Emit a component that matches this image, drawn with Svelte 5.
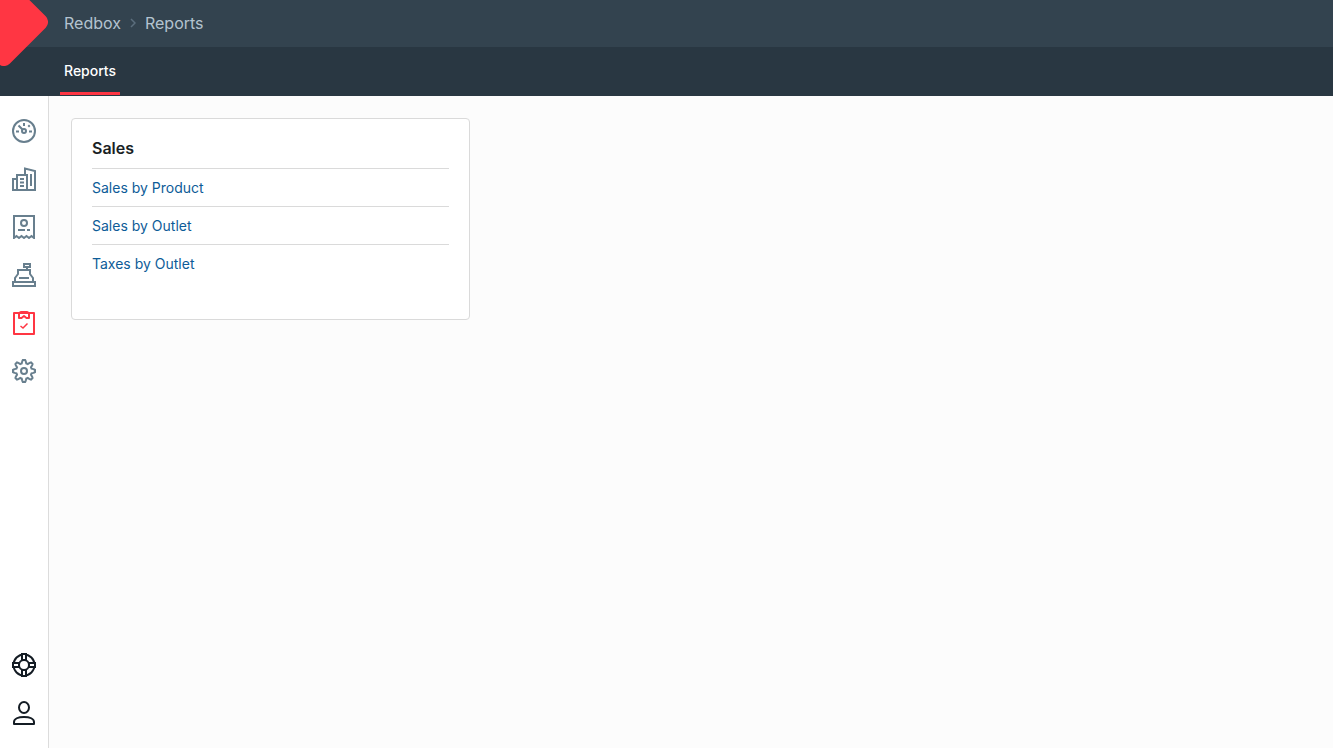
<script lang="ts">
	const tabs = [{ label: 'Reports', href: '#reports', active: true }];

	const groups = [
		{
			title: 'Sales',
			reports: [
				{ label: 'Sales by Product', href: '#sales-by-product' },
				{ label: 'Sales by Outlet', href: '#sales-by-outlet' },
				{ label: 'Taxes by Outlet', href: '#taxes-by-outlet' }
			]
		}
	];

	const mainNav = [
		{ id: 'dashboard', label: 'Dashboard' },
		{ id: 'company', label: 'Company' },
		{ id: 'receipts', label: 'Receipts' },
		{ id: 'registers', label: 'Registers' },
		{ id: 'reports', label: 'Reports' },
		{ id: 'settings', label: 'Settings' }
	];

	const footerNav = [
		{ id: 'help', label: 'Help' },
		{ id: 'account', label: 'Account' }
	];

	let current = $state('reports');

	// outline of the cog: eight rounded teeth
	const cog = Array.from({ length: 128 }, (_, i) => {
		const angle = (i / 128) * Math.PI * 2;
		const wave = Math.max(-1, Math.min(1, Math.cos(angle * 8) * 1.4));
		const r = 9.5 + wave * 1.6;
		return `${(12 + r * Math.cos(angle)).toFixed(2)},${(12 + r * Math.sin(angle)).toFixed(2)}`;
	}).join(' ');
</script>

{#snippet icon(id: string)}
	<svg class="icon" viewBox="0 0 24 24" aria-hidden="true">
		{#if id === 'dashboard'}
			<circle cx="12" cy="12" r="11" />
			<circle cx="12" cy="12" r="2" />
			<path d="M6.5 6.5 10.5 10.5M12 4v3M4 12.5h3M17 12.5h3M16.3 7.7l1.4-1.4" />
		{:else if id === 'company'}
			<path d="M5 12H1v11h22V4L13 1.500V8M5 23V8h10v15M8 12h4M8 15.500h4M8 19h4M19 7v12" />
		{:else if id === 'receipts'}
			<path d="M2 23V1h20v22l-2.500-2-2.500 2-2.500-2-2.500 2-2.500-2L7 23l-2.500-2z" />
			<circle cx="12" cy="8" r="3" />
			<path d="M6 15h7M15 15h3" />
		{:else if id === 'registers'}
			<path d="M1 19h22v4H1zM3 19v-4l3-4V7h12v4l3 4v4M7 15h10M12 1h6v3h-6zM15 4v3" />
		{:else if id === 'reports'}
			<path d="M2 2h20v21H2z" stroke-linejoin="round" />
			<path d="M7 2v5h2.500L12 5l2.500 2H17V2c-1 0-1-1-2-1H9C8 1 8 2 7 2" stroke-linejoin="round" />
			<path class="thin" d="m8.500 15 2.500 2 4.500-4.500" />
		{:else if id === 'settings'}
			<circle cx="12" cy="12" r="3" />
			<polygon points={cog} />
		{:else if id === 'help'}
			<circle cx="12" cy="12" r="10.500" />
			<circle cx="12" cy="12" r="5" />
			<path class="paper" d="M10 1h4v6h-4zM10 17h4v6h-4zM1 10h6v4H1zM17 10h6v4h-6z" />
		{:else if id === 'account'}
			<ellipse cx="12" cy="6.500" rx="5" ry="5.500" />
			<path d="M2 23v-2c0-3 4-5 10-5s10 2 10 5v2z" stroke-linejoin="round" />
		{/if}
	</svg>
{/snippet}

{#snippet navLinks(items: { id: string; label: string }[])}
	{#each items as item (item.id)}
		<a
			class="nav-link"
			class:active={current === item.id}
			href="#{item.id}"
			aria-label={item.label}
			onclick={() => (current = item.id)}
		>
			{@render icon(item.id)}
		</a>
	{/each}
{/snippet}

<div class="app">
	<header class="header">
		<a class="logo" href="#home" aria-label="Home">
			<svg viewBox="0 0 48 66" aria-hidden="true">
				<rect x="-29.500" y="-11.500" width="67" height="67" rx="8" transform="rotate(45 4 22)" />
			</svg>
		</a>
		<nav class="breadcrumbs" aria-label="Breadcrumb">
			<a href="#redbox">Redbox</a>
			<svg class="chevron" viewBox="0 0 6 10" aria-hidden="true">
				<path d="m1 1 4 4-4 4" />
			</svg>
			<a href="#reports">Reports</a>
		</nav>
		<nav class="tabs" aria-label="Sections">
			{#each tabs as tab (tab.href)}
				<a class="tab" class:active={tab.active} href={tab.href}>{tab.label}</a>
			{/each}
		</nav>
	</header>

	<div class="body">
		<nav class="sidebar" aria-label="Main">
			<div>{@render navLinks(mainNav)}</div>
			<div class="sidebar-footer">{@render navLinks(footerNav)}</div>
		</nav>

		<main class="content">
			{#each groups as group (group.title)}
				<section class="card">
					<h2>{group.title}</h2>
					<ul>
						{#each group.reports as report (report.href)}
							<li><a href={report.href}>{report.label}</a></li>
						{/each}
					</ul>
				</section>
			{/each}
		</main>
	</div>
</div>

<style>
	:global(body) {
		margin: 0;
		background: #fcfcfc;
	}

	.app {
		display: flex;
		flex-direction: column;
		min-height: 100vh;
		font-family: Inter, 'Liberation Sans', sans-serif;
		font-size: 14px;
	}

	a {
		text-decoration: none;
	}

	.header {
		position: relative;
	}

	.logo {
		position: absolute;
		top: 0;
		left: 0;
	}

	.logo svg {
		display: block;
		width: 48px;
		height: 66px;
		fill: #ff3643;
	}

	.breadcrumbs {
		display: flex;
		align-items: center;
		gap: 9px;
		padding-left: 64px;
		background: #33434f;
		font-size: 16px;
		line-height: 46px;
		border-bottom: 1px solid #33434f;
	}

	.breadcrumbs a {
		color: #b4c3d0;
	}

	.chevron {
		width: 6px;
		height: 10px;
		fill: none;
		stroke: #5b6e7d;
		stroke-width: 1.5;
	}

	.tabs {
		display: flex;
		height: 49px;
		padding-left: 60px;
		background: #293742;
	}

	.tab {
		box-sizing: border-box;
		height: 48px;
		padding: 0 4px;
		border-bottom: 3px solid transparent;
		color: #fff;
		font-weight: 500;
		line-height: 48px;
	}

	.tab.active {
		border-color: #ff3643;
	}

	.body {
		display: flex;
		flex: 1;
	}

	.sidebar {
		display: flex;
		flex-direction: column;
		justify-content: space-between;
		width: 48px;
		padding: 11px 0;
		border-right: 1px solid #dcdcdc;
		background: #fff;
	}

	.nav-link {
		display: flex;
		align-items: center;
		justify-content: center;
		height: 48px;
		color: #687f8e;
	}

	.sidebar-footer .nav-link {
		color: #141c24;
	}

	.nav-link.active {
		color: #ff3643;
	}

	.icon {
		width: 24px;
		height: 24px;
		fill: none;
		stroke: currentColor;
		stroke-width: 2;
	}

	.thin {
		stroke-width: 1.5;
	}

	.paper {
		fill: #fff;
	}

	.content {
		display: grid;
		flex: 1;
		grid-template-columns: repeat(3, 1fr);
		gap: 22px;
		align-items: start;
		padding: 22px;
	}

	.card {
		padding: 0 20px 37px;
		border: 1px solid #dadada;
		border-radius: 4px;
		background: #fff;
	}

	.card h2 {
		margin: 0;
		padding: 17px 0 8px;
		color: #1a1f25;
		font-size: 16px;
		font-weight: 600;
		line-height: 24px;
	}

	.card ul {
		margin: 0;
		padding: 0;
		list-style: none;
	}

	.card li {
		border-top: 1px solid #dadada;
		line-height: 37px;
	}

	.card li a {
		color: #0d5c98;
	}
</style>
